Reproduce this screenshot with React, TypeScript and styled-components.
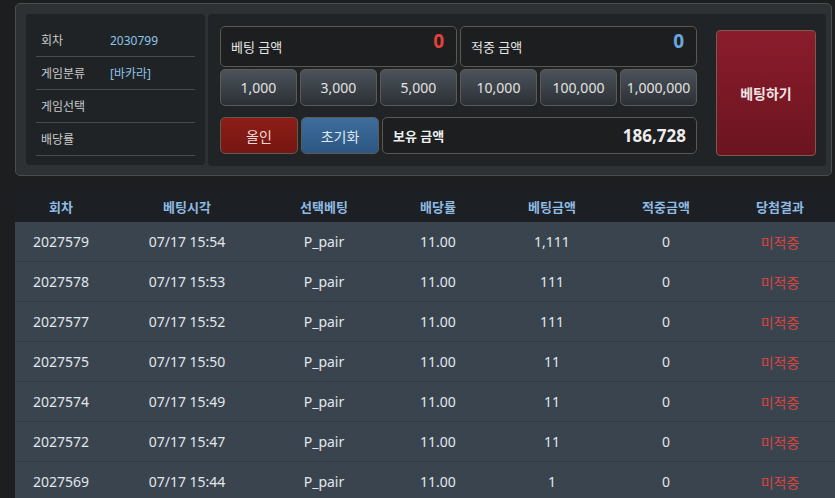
import React from "react";
import styled, { createGlobalStyle, css } from "styled-components";

const GlobalStyle = createGlobalStyle`
  html, body {
    margin: 0;
    padding: 0;
    background: #1d1e20;
    overflow: hidden;
  }
  body {
    font-family: "Noto Sans", "Noto Sans CJK KR", sans-serif;
  }
`;

const Page = styled.div`
  padding: 3px 0 0 15px;
  width: 822px;
`;

const TopPanel = styled.div`
  width: 817px;
  height: 173px;
  box-sizing: border-box;
  border: 1px solid #4a4d4e;
  border-radius: 5px;
  background: #2d3134;
  padding: 10px 5px 10px 10px;
  display: flex;
  gap: 3px;
`;

const InfoBox = styled.div`
  width: 179px;
  height: 151px;
  box-sizing: border-box;
  background: #1f2326;
  border-radius: 4px;
  padding: 10px 10px 0 10px;
`;

const InfoRow = styled.div`
  height: 32px;
  display: flex;
  align-items: center;
  border-bottom: 1px solid #4b4a47;
  font-size: 12px;
  padding-left: 5px;
`;

const InfoLabel = styled.span`
  width: 69px;
  color: #c9c9c9;
`;

const InfoValue = styled.span`
  color: #8cc3e6;
`;

const BetArea = styled.div`
  flex: 1;
  height: 152px;
  background: #202427;
  border-radius: 4px;
  padding: 12px 10px 0 12px;
  display: flex;
  gap: 19px;
  box-sizing: border-box;
`;

const BetLeft = styled.div`
  width: 477px;
  display: flex;
  flex-direction: column;
`;

const AmountRow = styled.div`
  display: flex;
  gap: 3px;
`;

const boxBase = css`
  box-sizing: border-box;
  border: 1px solid #5c574f;
  border-radius: 5px;
  background: #1c1e20;
`;

const AmountBox = styled.div`
  ${boxBase};
  flex: 1;
  height: 41px;
  position: relative;
  display: flex;
  align-items: center;
  padding-left: 10px;
  font-size: 13px;
  color: #e6e6e6;
`;

const AmountValue = styled.span<{ $color: string }>`
  position: absolute;
  right: 12px;
  top: 1px;
  font-size: 19px;
  font-weight: 700;
  color: ${(p) => p.$color};
`;

const ChipRow = styled.div`
  display: flex;
  gap: 3px;
  margin-top: 2px;
`;

const Chip = styled.button`
  flex: 1;
  height: 37px;
  box-sizing: border-box;
  border: 1px solid #5e5a55;
  border-radius: 5px;
  background: linear-gradient(#4b535a, #2b3035);
  color: #e2e2e2;
  font-family: inherit;
  font-size: 14px;
  padding: 0;
`;

const ActionRow = styled.div`
  display: flex;
  gap: 3px;
  margin-top: 11px;
`;

const ActionButton = styled.button<{ $tone: "red" | "blue" }>`
  width: 78px;
  height: 37px;
  box-sizing: border-box;
  border: 1px solid #5e5a55;
  border-radius: 5px;
  font-family: inherit;
  font-size: 14px;
  padding: 0;
  ${(p) =>
    p.$tone === "red"
      ? css`
          background: linear-gradient(#8c1d17, #761711);
          color: #f1d8d6;
        `
      : css`
          background: linear-gradient(#3d6d9c, #2d5683);
          color: #dfe8f1;
        `}
`;

const HoldBox = styled.div`
  ${boxBase};
  flex: 1;
  height: 37px;
  display: flex;
  align-items: center;
  justify-content: space-between;
  padding: 0 10px;
  color: #ededed;
`;

const HoldLabel = styled.span`
  font-size: 13px;
  font-weight: 700;
`;

const HoldValue = styled.span`
  font-size: 17px;
  font-weight: 700;
`;

const BetButton = styled.button`
  width: 100px;
  height: 126px;
  margin-top: 4px;
  box-sizing: border-box;
  border: 1px solid #7d5a4f;
  border-radius: 4px;
  background: linear-gradient(#8b1c2c, #6b1420);
  color: #f0e4e4;
  font-family: inherit;
  font-size: 14px;
  font-weight: 700;
  padding: 0;
`;

const Table = styled.div`
  margin-top: 14px;
  width: 822px;
`;

const columns = "92px 160px 114px 114px 114px 114px 114px";

const HeaderRow = styled.div`
  display: grid;
  grid-template-columns: ${columns};
  height: 32px;
  align-items: center;
  background: #1c2025;
  color: #8fbbe3;
  font-size: 13px;
  font-weight: 700;
  text-align: center;
`;

const BodyRow = styled.div`
  display: grid;
  grid-template-columns: ${columns};
  height: 39px;
  align-items: center;
  background: #3a444f;
  border-bottom: 1px solid #2d3a48;
  color: #e1e7ec;
  font-size: 14px;
  text-align: center;
`;

const Cell = styled.span<{ $lose?: boolean }>`
  color: ${(p) => (p.$lose ? "#d9443f" : "inherit")};
`;

const headers = ["회차", "베팅시각", "선택베팅", "배당률", "베팅금액", "적중금액", "당첨결과"];

const rows = [
  ["2027579", "07/17 15:54", "1,111"],
  ["2027578", "07/17 15:53", "111"],
  ["2027577", "07/17 15:52", "111"],
  ["2027575", "07/17 15:50", "11"],
  ["2027574", "07/17 15:49", "11"],
  ["2027572", "07/17 15:47", "11"],
  ["2027569", "07/17 15:44", "1"],
];

const chips = ["1,000", "3,000", "5,000", "10,000", "100,000", "1,000,000"];

const info: [string, string][] = [
  ["회차", "2030799"],
  ["게임분류", "[바카라]"],
  ["게임선택", ""],
  ["배당률", ""],
];

export default function App() {
  return (
    <Page>
      <GlobalStyle />
      <TopPanel>
        <InfoBox>
          {info.map(([label, value]) => (
            <InfoRow key={label}>
              <InfoLabel>{label}</InfoLabel>
              <InfoValue>{value}</InfoValue>
            </InfoRow>
          ))}
        </InfoBox>
        <BetArea>
          <BetLeft>
            <AmountRow>
              <AmountBox>
                베팅 금액
                <AmountValue $color="#e0423d">0</AmountValue>
              </AmountBox>
              <AmountBox>
                적중 금액
                <AmountValue $color="#6aa6dd">0</AmountValue>
              </AmountBox>
            </AmountRow>
            <ChipRow>
              {chips.map((c) => (
                <Chip key={c}>{c}</Chip>
              ))}
            </ChipRow>
            <ActionRow>
              <ActionButton $tone="red">올인</ActionButton>
              <ActionButton $tone="blue">초기화</ActionButton>
              <HoldBox>
                <HoldLabel>보유 금액</HoldLabel>
                <HoldValue>186,728</HoldValue>
              </HoldBox>
            </ActionRow>
          </BetLeft>
          <BetButton>베팅하기</BetButton>
        </BetArea>
      </TopPanel>
      <Table>
        <HeaderRow>
          {headers.map((h) => (
            <span key={h}>{h}</span>
          ))}
        </HeaderRow>
        {rows.map(([round, time, amount]) => (
          <BodyRow key={round}>
            <Cell>{round}</Cell>
            <Cell>{time}</Cell>
            <Cell>P_pair</Cell>
            <Cell>11.00</Cell>
            <Cell>{amount}</Cell>
            <Cell>0</Cell>
            <Cell $lose>미적중</Cell>
          </BodyRow>
        ))}
      </Table>
    </Page>
  );
}
